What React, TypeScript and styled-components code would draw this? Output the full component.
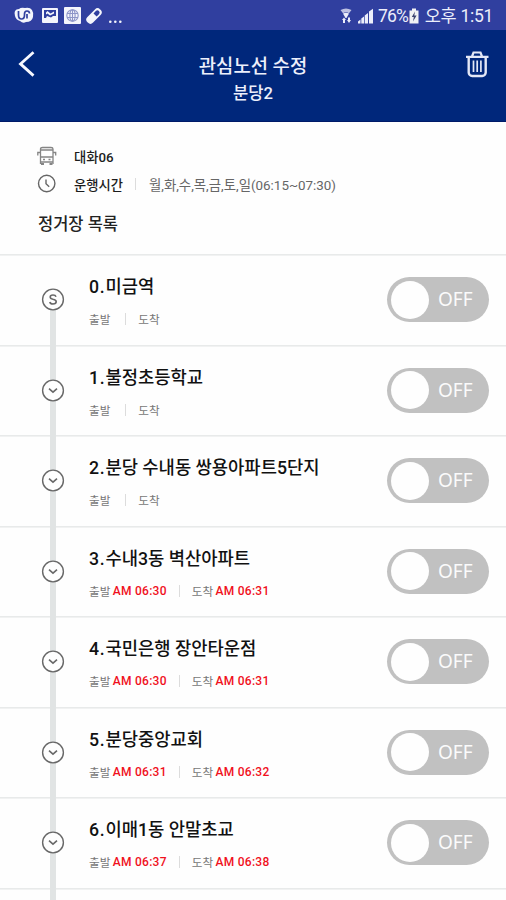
import React from "react";
import styled, { createGlobalStyle } from "styled-components";

const GlobalStyle = createGlobalStyle`
  * { box-sizing: border-box; }
  html, body { margin: 0; padding: 0; background: #fefefe; }
  body {
    font-family: Roboto, "Noto Sans CJK KR", sans-serif;
    overflow: hidden;
  }
`;

const Screen = styled.div`
  display: flex;
  flex-direction: column;
  width: 506px;
  height: 900px;
  overflow: hidden;
  background: #fefefe;
`;

const StatusBar = styled.div`
  flex: none;
  display: flex;
  align-items: center;
  justify-content: space-between;
  height: 30px;
  padding: 2px 13px 0 14px;
  background: #303f9f;
  color: #eceefa;
`;

const StatusGroup = styled.div`
  display: flex;
  align-items: center;
  height: 28px;
`;

const StatusText = styled.span<{ $ml?: number; $spacing?: number }>`
  margin-left: ${(p) => p.$ml ?? 0}px;
  font-size: 17.5px;
  letter-spacing: ${(p) => p.$spacing ?? 0}px;
  line-height: 28px;
  white-space: nowrap;
`;

const Header = styled.header`
  flex: none;
  display: grid;
  grid-template-columns: 60px 1fr 60px;
  height: 92px;
  background: #00277b;
  border-bottom: 1px solid #001a68;
  color: #edf0fb;
`;

const IconButton = styled.button<{ $end?: boolean }>`
  display: flex;
  justify-content: ${(p) => (p.$end ? "flex-end" : "flex-start")};
  align-items: flex-start;
  height: 60px;
  padding: ${(p) => (p.$end ? "20px 16px 0 0" : "20px 0 0 17px")};
  border: 0;
  background: none;
`;

const HeaderTitles = styled.div`
  display: flex;
  flex-direction: column;
  align-items: center;
  padding-top: 23px;
`;

const Title = styled.h1`
  margin: 0;
  font-size: 18.8px;
  font-weight: 500;
  line-height: 28px;
`;

const Subtitle = styled.h2`
  margin: 0;
  font-size: 16.6px;
  font-weight: 500;
  line-height: 26px;
`;

const Summary = styled.section`
  flex: none;
  height: 132px;
  padding: 20px 0 0 37px;
`;

const SummaryRow = styled.div`
  display: flex;
  align-items: center;
  height: 28px;
  font-size: 13.3px;
  color: #666;
  white-space: nowrap;
`;

const SummaryIcon = styled.span`
  display: flex;
  width: 37px;
`;

const Strong = styled.span`
  font-weight: 500;
  color: #1c1c1c;
`;

const Hours = styled.span`
  font-size: 13.4px;
`;

const Divider = styled.i<{ $before: number; $after: number }>`
  width: 1px;
  height: 12px;
  margin: 0 ${(p) => p.$after}px 0 ${(p) => p.$before}px;
  background: #dcdcdc;
`;

const ListTitle = styled.h3`
  margin: 13px 0 0 1px;
  font-size: 16.5px;
  font-weight: 500;
  line-height: 28px;
  color: #222;
`;

const StopList = styled.ul`
  flex: none;
  margin: 0;
  padding: 0;
  list-style: none;
`;

const StopRow = styled.li`
  display: grid;
  grid-template-columns: 89px 1fr 119px;
  height: 90.5px;
  background: linear-gradient(#e8eaea, #e8eaea) no-repeat 0 0 / 100% 1.6px;
`;

const Rail = styled.div<{ $first?: boolean }>`
  display: flex;
  justify-content: center;
  width: 106px;
  height: 90.5px;
  padding-top: 34px;
  background: linear-gradient(#e1e4e4, #e1e4e4) no-repeat 50px
    ${(p) => (p.$first ? 46 : 0)}px / 6px 100%;
`;

const StopInfo = styled.div`
  padding-top: 19px;
  min-width: 0;
`;

const StopName = styled.div`
  font-size: 17.7px;
  font-weight: 500;
  line-height: 28px;
  color: #111;
  white-space: nowrap;
`;

const Ordinal = styled.span`
  letter-spacing: 0.7px;
`;

const Times = styled.div`
  display: flex;
  align-items: center;
  height: 26px;
  margin-top: 5px;
  font-size: 11.6px;
  color: #777;
  white-space: nowrap;
`;

const Clock = styled.b`
  margin-left: 2.5px;
  font-weight: 500;
  font-size: 12px;
  letter-spacing: 0.25px;
  color: #f0101c;
`;

const Toggle = styled.button`
  display: flex;
  align-items: center;
  width: 102px;
  height: 45px;
  margin: 23px 0 0;
  padding: 0 0 0 4px;
  border: 0;
  border-radius: 23px;
  background: #c1c1c1;
  color: #fbfbfb;
  font: 400 19px/45px "Noto Sans", sans-serif;
`;

const Knob = styled.span`
  width: 38px;
  height: 38px;
  margin-right: 9px;
  border-radius: 50%;
  background: #fefefe;
`;

const NoticeIcons = () => (
  <svg width="110" height="22" viewBox="14 5 110 22" fill="#f4f5fc">
    <path d="M15 11q1-2 4-2 2-2 6-1 5-1 7 2 2 3 1 7-1 5-7 5-3 2-6-1-4-1-5-5-1-3 0-5Z" />
    <path d="M18.500 11v4q0 4 3 4t3-4v-1q0-3 2.500-3t2.500 2.500M27 14v4.500" fill="none" stroke="#303f9f" strokeWidth="1.700" />
    <rect x="42" y="8" width="16" height="15" rx="1" />
    <path d="M44 10h12v6h-3l-2 1.500-4-1.500-1 2h-2Z" fill="#303f9f" />
    <path d="m46 12.500 1.500-1.500 3 2.500 3.500-2v2l-4 2-2.500-2-1.500 1Z" />
    <rect x="64" y="7" width="17" height="17" rx="1" />
    <g fill="none" stroke="#8d95c8" strokeWidth="1.100">
      <circle cx="72.500" cy="15.500" r="5.700" />
      <ellipse cx="72.500" cy="15.500" rx="2.600" ry="5.700" />
      <path d="M67 13.500h11M67 17.500h11M72.500 10v11" />
    </g>
    <g transform="rotate(-45 94 16)">
      <rect x="85" y="12" width="18" height="8" rx="3.700" />
      <path d="M95.500 13.800h3.300a2.200 2.200 0 0 1 0 4.400h-3.300Z" fill="#303f9f" />
    </g>
    <circle cx="110.300" cy="21.800" r="1.300" />
    <circle cx="115.300" cy="21.800" r="1.300" />
    <circle cx="120.300" cy="21.800" r="1.300" />
  </svg>
);

const SignalIcons = () => (
  <svg width="34" height="20" viewBox="338 6 34 20" fill="#eceefa">
    <path d="M338.500 10q5.500-3 11 0l-2.500 3.200q-3-1.700-6 0Z" opacity=".75" />
    <path d="M341 13.500q3-1.500 6 0L344.500 18h-1Z" />
    <path d="m340 20 2-2.600 2 2.600h-1v3h-2v-3ZM345 20h1v-2.600h2V20h1l-2 3Z" />
    <path d="M356 23.500v-2l2.500-2v4ZM359.300 23.500v-5l2.700-2v7ZM362.700 23.500v-8l3.300-2.500v10.500ZM367 23.500V11.500l4-2.800v14.800Z" />
  </svg>
);

const BatteryIcon = () => (
  <svg width="12" height="18" viewBox="0 0 12 18">
    <path d="M4 1.500h4v2h2.500v13h-9v-13H4Z" fill="#f1f2f4" />
    <path d="M7 4.500 3.800 10h2L5 14.500l3.600-6H6.300Z" fill="#3c4470" />
  </svg>
);

const BackIcon = () => (
  <svg width="20" height="28" viewBox="0 0 20 28" fill="none" stroke="#f6f8ff" strokeWidth="2.800">
    <path d="M16.500 2.200 3.500 13.900 16.500 25.600" strokeLinejoin="miter" />
  </svg>
);

const TrashIcon = () => (
  <svg width="26" height="28" viewBox="0 0 26 28" fill="none" stroke="#e3e7f6" strokeWidth="2.200">
    <path d="M2 6.800h22.500M8 6.500l1.500-4h7l1.500 4" />
    <path d="M4.700 7v15.500a3.500 3.500 0 0 0 3.500 3.500h10a3.500 3.500 0 0 0 3.500-3.500V7" strokeWidth="2.400" />
    <path d="M9.500 10.500v11.500M13.200 10.500v11.500M16.900 10.500v11.500" strokeWidth="1.700" />
  </svg>
);

const BusIcon = () => (
  <svg width="20" height="20" viewBox="0 0 20 20" fill="none" stroke="#858585" strokeWidth="1.300">
    <path d="M3.500 18V3q0-1.500 2-1.500h8.500q2 0 2 1.500V18" />
    <path d="M4 4h12M4 11h12M3.500 16h12.500M3.500 6.500H.8v3M16 6.500h2.700v3M6 13.500h2M11.500 13.500h2" />
    <path d="M4 18h3M12.500 18h3" strokeWidth="2" />
  </svg>
);

const ClockIcon = () => (
  <svg width="20" height="20" viewBox="0 0 20 20" fill="none" stroke="#666" strokeWidth="1.400">
    <circle cx="9.700" cy="9.500" r="8.200" />
    <path d="M9 5.500v4.200l3.200 3" />
  </svg>
);

const StopMarker = ({ start }: { start?: boolean }) => (
  <svg width="24" height="24" viewBox="0 0 24 24" fill="none" stroke="#686868">
    <circle cx="12" cy="11.500" r="10.400" fill="#fefefe" strokeWidth="1.400" />
    {start ? (
      <path d="M15 8.700q-.5-1.700-3-1.700-2.800 0-2.800 2 0 1.700 2.800 2.300 3.200.6 3.200 2.500 0 2.200-3.200 2.200-2.700 0-3.200-2" strokeWidth="1.600" />
    ) : (
      <path d="m8 9.700 4 3.500 4-3.500" strokeWidth="1.600" />
    )}
  </svg>
);

interface Stop {
  name: string;
  departs?: string;
  arrives?: string;
}

const stops: Stop[] = [
  { name: "미금역" },
  { name: "불정초등학교" },
  { name: "분당 수내동 쌍용아파트5단지" },
  { name: "수내3동 벽산아파트", departs: "AM 06:30", arrives: "AM 06:31" },
  { name: "국민은행 장안타운점", departs: "AM 06:30", arrives: "AM 06:31" },
  { name: "분당중앙교회", departs: "AM 06:31", arrives: "AM 06:32" },
  { name: "이매1동 안말초교", departs: "AM 06:37", arrives: "AM 06:38" },
];

export default function App() {
  return (
    <>
      <GlobalStyle />
      <Screen>
        <StatusBar>
          <StatusGroup>
            <NoticeIcons />
          </StatusGroup>
          <StatusGroup>
            <SignalIcons />
            <StatusText $ml={4} $spacing={-0.9}>76%</StatusText>
            <BatteryIcon />
            <StatusText $ml={5} $spacing={-0.3}>오후 1:51</StatusText>
          </StatusGroup>
        </StatusBar>
        <Header>
          <IconButton aria-label="뒤로">
            <BackIcon />
          </IconButton>
          <HeaderTitles>
            <Title>관심노선 수정</Title>
            <Subtitle>분당2</Subtitle>
          </HeaderTitles>
          <IconButton $end aria-label="삭제">
            <TrashIcon />
          </IconButton>
        </Header>
        <Summary>
          <SummaryRow>
            <SummaryIcon><BusIcon /></SummaryIcon>
            <Strong>대화06</Strong>
          </SummaryRow>
          <SummaryRow>
            <SummaryIcon><ClockIcon /></SummaryIcon>
            <Strong>운행시간</Strong>
            <Divider $before={12} $after={13} />
            <Hours>월,화,수,목,금,토,일(06:15~07:30)</Hours>
          </SummaryRow>
          <ListTitle>정거장 목록</ListTitle>
        </Summary>
        <StopList>
          {stops.map((stop, i) => (
            <StopRow key={stop.name}>
              <Rail $first={i === 0}>
                <StopMarker start={i === 0} />
              </Rail>
              <StopInfo>
                <StopName>
                  <Ordinal>{i}.</Ordinal>
                  {stop.name}
                </StopName>
                <Times>
                  출발{stop.departs && <Clock>{stop.departs}</Clock>}
                  <Divider $before={stop.departs ? 12 : 15} $after={12} />
                  도착{stop.arrives && <Clock>{stop.arrives}</Clock>}
                </Times>
              </StopInfo>
              <Toggle role="switch" aria-checked={false}>
                <Knob />
                OFF
              </Toggle>
            </StopRow>
          ))}
          <StopRow>
            <Rail />
          </StopRow>
        </StopList>
      </Screen>
    </>
  );
}
